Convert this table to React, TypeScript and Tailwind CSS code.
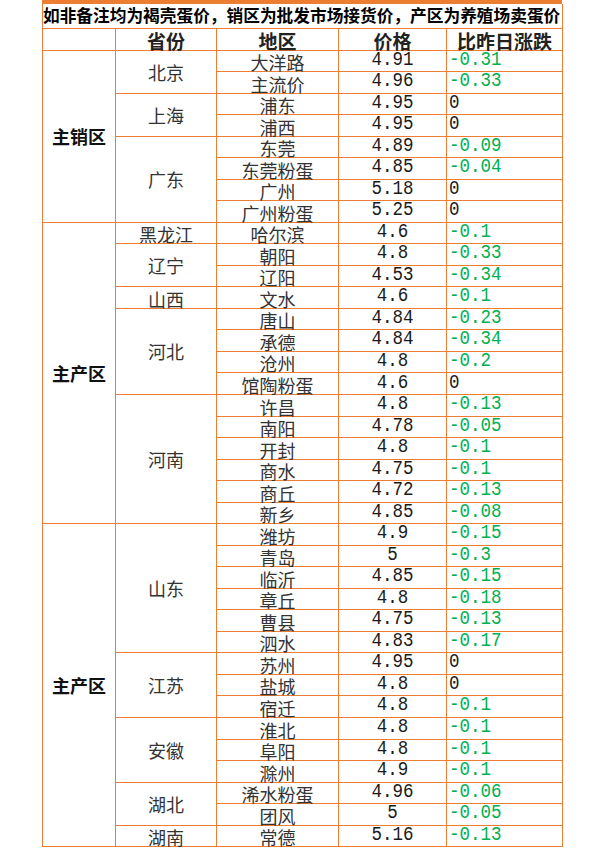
import React from "react";

type Row = { region: string; price: string; change: string };
type Prov = { name: string; rows: Row[] };
type Group = { name: string; provs: Prov[] };

const r = (region: string, price: string, change: string): Row => ({ region, price, change });

const groups: Group[] = [
  {
    name: "主销区",
    provs: [
      { name: "北京", rows: [r("大洋路", "4.91", "-0.31"), r("主流价", "4.96", "-0.33")] },
      { name: "上海", rows: [r("浦东", "4.95", "0"), r("浦西", "4.95", "0")] },
      {
        name: "广东",
        rows: [r("东莞", "4.89", "-0.09"), r("东莞粉蛋", "4.85", "-0.04"), r("广州", "5.18", "0"), r("广州粉蛋", "5.25", "0")],
      },
    ],
  },
  {
    name: "主产区",
    provs: [
      { name: "黑龙江", rows: [r("哈尔滨", "4.6", "-0.1")] },
      { name: "辽宁", rows: [r("朝阳", "4.8", "-0.33"), r("辽阳", "4.53", "-0.34")] },
      { name: "山西", rows: [r("文水", "4.6", "-0.1")] },
      {
        name: "河北",
        rows: [r("唐山", "4.84", "-0.23"), r("承德", "4.84", "-0.34"), r("沧州", "4.8", "-0.2"), r("馆陶粉蛋", "4.6", "0")],
      },
      {
        name: "河南",
        rows: [
          r("许昌", "4.8", "-0.13"),
          r("南阳", "4.78", "-0.05"),
          r("开封", "4.8", "-0.1"),
          r("商水", "4.75", "-0.1"),
          r("商丘", "4.72", "-0.13"),
          r("新乡", "4.85", "-0.08"),
        ],
      },
    ],
  },
  {
    name: "主产区",
    provs: [
      {
        name: "山东",
        rows: [
          r("潍坊", "4.9", "-0.15"),
          r("青岛", "5", "-0.3"),
          r("临沂", "4.85", "-0.15"),
          r("章丘", "4.8", "-0.18"),
          r("曹县", "4.75", "-0.13"),
          r("泗水", "4.83", "-0.17"),
        ],
      },
      { name: "江苏", rows: [r("苏州", "4.95", "0"), r("盐城", "4.8", "0"), r("宿迁", "4.8", "-0.1")] },
      { name: "安徽", rows: [r("淮北", "4.8", "-0.1"), r("阜阳", "4.8", "-0.1"), r("滁州", "4.9", "-0.1")] },
      { name: "湖北", rows: [r("浠水粉蛋", "4.96", "-0.06"), r("团风", "5", "-0.05")] },
      { name: "湖南", rows: [r("常德", "5.16", "-0.13")] },
    ],
  },
];

const cjk = { fontFamily: '"Noto Sans CJK SC", "Noto Sans", sans-serif' };
const mono = { fontFamily: '"Liberation Mono", "DejaVu Sans Mono", monospace' };

const cell = "border border-[#ed7d31] p-0";

export default function App() {
  const trs: React.ReactNode[] = [];
  groups.forEach((g, gi) => {
    const gCount = g.provs.reduce((a, p) => a + p.rows.length, 0);
    g.provs.forEach((p, pi) => {
      p.rows.forEach((row, ri) => {
        const neg = row.change.startsWith("-");
        trs.push(
          <tr key={`${gi}-${pi}-${ri}`} className="h-[21.54px]">
            {pi === 0 && ri === 0 && (
              <td
                rowSpan={gCount}
                className={`${cell} text-center align-middle text-[18px] font-bold leading-none text-[#111]`}
                style={cjk}
              >
                {g.name}
              </td>
            )}
            {ri === 0 && (
              <td
                rowSpan={p.rows.length}
                className={`${cell} text-center text-[18px] leading-none text-[#333] ${
                  p.rows.length > 1 ? "align-middle" : "align-bottom"
                }`}
                style={cjk}
              >
                {p.name}
              </td>
            )}
            <td className={`${cell} text-center align-bottom text-[18px] leading-none text-[#333] whitespace-nowrap`} style={cjk}>
              {row.region}
            </td>
            <td className={`${cell} text-center align-bottom text-[17.5px] leading-none text-[#1a1a1a]`} style={mono}>
              <span className="inline-block scale-y-[1.2] origin-bottom pb-[1px]">{row.price}</span>
            </td>
            <td
              className={`${cell} pl-[2px] text-left align-bottom text-[17.5px] leading-none ${
                neg ? "text-[#00b050]" : "text-[#1a1a1a]"
              }`}
              style={mono}
            >
              <span className="inline-block scale-y-[1.2] origin-bottom pb-[1px]">{row.change}</span>
            </td>
          </tr>
        );
      });
    });
  });

  return (
    <div className="min-h-[849px] w-[610px] bg-white">
      <div className="ml-[42px] w-[520px] border-t-4 border-[#ed7d31]">
        <table className="w-[520px] table-fixed border-collapse">
          <colgroup>
            <col className="w-[73px]" />
            <col className="w-[101px]" />
            <col className="w-[122px]" />
            <col className="w-[108px]" />
            <col className="w-[116px]" />
          </colgroup>
          <tbody>
            <tr className="h-[24px]">
              <td
                colSpan={5}
                className={`${cell} border-t-0 whitespace-nowrap text-left align-middle text-[16.7px] font-bold leading-none text-black`}
                style={cjk}
              >
                如非备注均为褐壳蛋价，销区为批发市场接货价，产区为养殖场卖蛋价
              </td>
            </tr>
            <tr className="h-[22px]">
              <td className={cell}></td>
              {["省份", "地区", "价格", "比昨日涨跌"].map((h) => (
                <td
                  key={h}
                  className={`${cell} text-center align-bottom text-[19px] font-bold leading-none text-[#222]`}
                  style={cjk}
                >
                  {h}
                </td>
              ))}
            </tr>
            {trs}
          </tbody>
        </table>
      </div>
    </div>
  );
}
